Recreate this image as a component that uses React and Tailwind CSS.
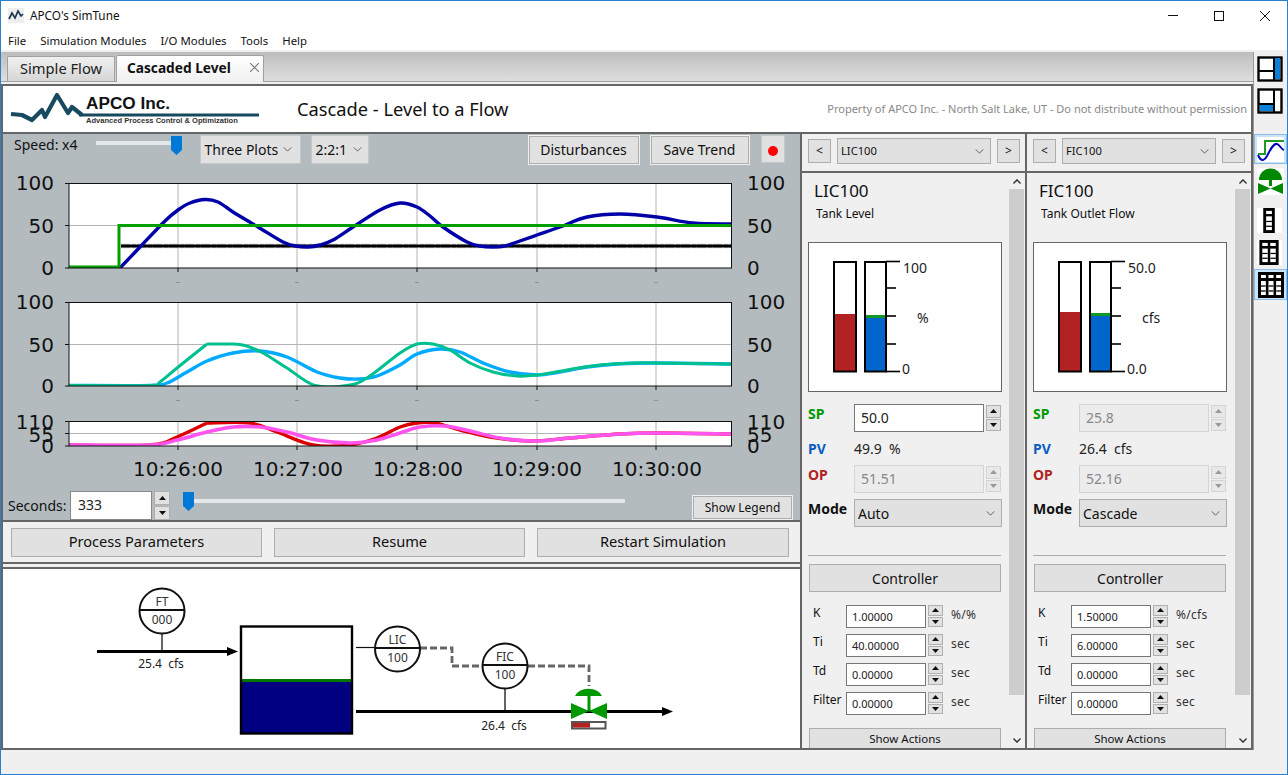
import React from "react";

const chartFont = "'DejaVu Sans', sans-serif";

function smooth(pts) {
  let d = `M${pts[0][0]} ${pts[0][1]}`;
  for (let i = 0; i < pts.length - 1; i++) {
    const p0 = pts[i - 1] || pts[i];
    const p1 = pts[i];
    const p2 = pts[i + 1];
    const p3 = pts[i + 2] || p2;
    const c1x = p1[0] + (p2[0] - p0[0]) / 6;
    const c1y = p1[1] + (p2[1] - p0[1]) / 6;
    const c2x = p2[0] - (p3[0] - p1[0]) / 6;
    const c2y = p2[1] - (p3[1] - p1[1]) / 6;
    d += ` C${c1x} ${c1y} ${c2x} ${c2y} ${p2[0]} ${p2[1]}`;
  }
  return d;
}

const pv1 = [[120,268],[140,247],[165,221],[178,210],[190,203],[205,199.5],[218,202],[233,212],[258,227],[283,242],[296,246],[308,247],[320,245],[333,240],[353,227],[380,210],[400,203],[417,207],[430,216],[443,227],[467,242],[480,246],[493,247],[505,246],[517,242],[537,235],[560,227],[587,217],[620,214],[657,217],[693,223],[731,224]];
const sp2a = [[69,385.5],[150,385.5],[160,382],[177,368],[207,344]];
const sp2b = [[207,344],[230,344],[245,345.5],[263,353],[287,368],[315,385.5],[347,385.5],[367,378],[400,353],[417,344],[433,344],[450,350],[470,363],[493,372],[517,376],[537,375],[567,370],[600,365],[633,363],[657,363],[731,364]];
const op2 = [[69,385.5],[150,385.5],[167,383],[187,372],[207,361],[233,353],[260,351],[287,357],[317,372],[340,378],[360,379],[377,376],[400,365],[417,354],[440,349],[460,352],[483,363],[510,372],[537,375],[560,372],[587,367],[617,364],[657,363],[731,364]];
const red3a = [[69,445],[150,445],[177,437],[207,423]];
const red3b = [[207,423],[250,423],[277,432],[313,445],[350,445],[377,438],[400,427],[417,423],[435,423],[460,430],[490,437],[530,441],[570,438],[620,434],[657,433],[731,434]];
const mag3 = [[69,445],[150,445],[177,440],[207,432],[233,427],[260,427],[287,432],[317,440],[350,443],[377,440],[400,433],[420,427],[445,426],[470,431],[500,438],[535,441],[570,438],[620,434],[657,433],[731,434]];

const gridX = [178, 297, 417, 537, 656];

function Plot({ top, bottom, mid, labels, offsets, children, showMinus }) {
  const clip = `plot-${top}`;
  return (
    <g>
      <clipPath id={clip}>
        <rect x="69" y={top} width="662.5" height={bottom - top} />
      </clipPath>
      <rect x="69" y={top} width="662.5" height={bottom - top} fill="white" />
      {gridX.map((x) => (
        <line key={x} x1={x} x2={x} y1={top} y2={bottom} stroke="#b4b4b4" />
      ))}
      <line x1="69" x2="731" y1={mid} y2={mid} stroke="#b4b4b4" />
      <g clipPath={`url(#${clip})`}>{children}</g>
      <rect x="69" y={top} width="662.5" height={bottom - top} fill="none" stroke="#111" />
      {[top, mid, bottom].map((y) => (
        <line key={y} x1="65" x2="69" y1={y} y2={y} stroke="#111" />
      ))}
      {gridX.map((x) => (
        <line key={x} x1={x} x2={x} y1={bottom} y2={bottom + 4} stroke="#111" />
      ))}
      {showMinus && gridX.map((x) => (
        <line key={x} x1={x - 2} x2={x + 2} y1={bottom + 14.5} y2={bottom + 14.5} stroke="#8a9094" />
      ))}
      {labels.map((t, i) => (
        <g key={i} fontSize="20" fontFamily={chartFont} fill="#111">
          <text x="54" y={offsets[i]} textAnchor="end">{t}</text>
          <text x="747" y={offsets[i]}>{t}</text>
        </g>
      ))}
    </g>
  );
}

function Charts() {
  return (
    <svg viewBox="3 170 797 320" className="block w-[797px] h-[320px]">
      <Plot top={183.5} bottom={268} mid={225.5} labels={["100", "50", "0"]} offsets={[190, 233, 275]} showMinus>
        <polyline points="121,246 731,246" fill="none" stroke="#c4c4c4" strokeWidth="4.4" strokeDasharray="9 2 4 1" />
        <polyline points="121,246 731,246" fill="none" stroke="#000" strokeWidth="2.8" />
        <path d={smooth(pv1)} fill="none" stroke="#0000a8" strokeWidth="3.4" />
        <polyline points="69,267 119,267 119,225.5 731,225.5" fill="none" stroke="#009f00" strokeWidth="3" />
      </Plot>
      <Plot top={302.5} bottom={386} mid={344.5} labels={["100", "50", "0"]} offsets={[309, 352, 393]} showMinus>
        <path d={smooth(op2)} fill="none" stroke="#00aaff" strokeWidth="3.4" />
        <path d={smooth(sp2a) + " " + smooth(sp2b)} fill="none" stroke="#00c090" strokeWidth="3" />
      </Plot>
      <Plot top={421.5} bottom={446} mid={433.5} labels={["110", "55", "0"]} offsets={[429, 442, 453]}>
        <path d={smooth(red3a) + " " + smooth(red3b)} fill="none" stroke="#dd0000" strokeWidth="3.4" />
        <path d={smooth(mag3)} fill="none" stroke="#ff55ee" strokeWidth="3.6" />
      </Plot>
      <g fontSize="20" fontFamily={chartFont} fill="#111" textAnchor="middle">
        <text x="178" y="476">10:26:00</text>
        <text x="298" y="476">10:27:00</text>
        <text x="418" y="476">10:28:00</text>
        <text x="537" y="476">10:29:00</text>
        <text x="657" y="476">10:30:00</text>
      </g>
    </svg>
  );
}

function Chevron({ className, bold }) {
  return (
    <svg viewBox="0 0 10 6" className={className || "w-[9px] h-[5px]"}>
      <polyline points="0.5,0.5 5,5 9.5,0.5" fill="none" stroke={bold ? "#333" : "#555"} strokeWidth={bold ? 1.8 : 1.1} />
    </svg>
  );
}

function Select({ value, className, text }) {
  return (
    <div className={`flex items-center justify-between bg-[#e1e1e1] border ${className} ${text || "text-[14px]"}`}>
      <span className="text-[#111]">{value}</span>
      <Chevron />
    </div>
  );
}

function Spinner({ h, w, disabled, gap }) {
  const color = disabled ? "#999" : "#111";
  const cls = disabled ? "border-[#d4d4d4] bg-[#e8e8e8]" : "border-[#b0b0b0] bg-[#e1e1e1]";
  return (
    <div className={`flex flex-col justify-between ${w} ${h}`}>
      {[0, 1].map((i) => (
        <div key={i} className={`flex-1 flex items-center justify-center border ${cls} ${i === 0 ? gap : ""}`}>
          <svg viewBox="0 0 7 4" className="w-[7px] h-[4px]">
            <polygon points={i === 0 ? "3.5,0 7,4 0,4" : "0,0 7,0 3.5,4"} fill={color} />
          </svg>
        </div>
      ))}
    </div>
  );
}

function Thumb({ className }) {
  return (
    <svg viewBox="0 0 11 19" className={className}>
      <polygon points="0,0 11,0 11,14 5.5,19 0,14" fill="#0078d7" />
    </svg>
  );
}

function Gauge({ op, sp, top, unit, low }) {
  const ticks = [261.5, 288, 316, 344, 371.5];
  return (
    <svg viewBox="808 242 194 150" className="block w-[194px] h-[150px] bg-white">
      <rect x="808.5" y="242.5" width="193" height="149" fill="none" stroke="#666" />
      <rect x="834" y={op} width="22" height={371 - op} fill="#b22222" />
      <rect x="865" y={sp} width="21" height={371 - sp} fill="#0066cc" />
      <rect x="865" y={sp - 3} width="21" height="3" fill="#119922" />
      <rect x="834" y="262" width="22" height="109.5" fill="none" stroke="#000" strokeWidth="2" />
      <rect x="865" y="262" width="21" height="109.5" fill="none" stroke="#000" strokeWidth="2" />
      {ticks.map((y, i) => (
        <line key={y} x1="886" x2={i % 4 === 0 ? 900 : 896} y1={y} y2={y} stroke="#000" strokeWidth="1.6" />
      ))}
      <g fontSize="14" fill="#222" fontFamily="'Noto Sans', sans-serif">
        <text x="903" y="273">{top}</text>
        <text x="917" y="323">{unit}</text>
        <text x="902" y="374">{low}</text>
      </g>
    </svg>
  );
}

function TuneRow({ label, value, unit }) {
  return (
    <div className="flex items-start h-[23px]">
      <span className="w-[33px] text-[12px] leading-[16px] text-[#111]">{label}</span>
      <div className="w-[80px] h-[23px] border border-[#777] bg-white pl-[5px] text-[11px] leading-[21px] text-[#222]">{value}</div>
      <Spinner h="h-[22px]" w="w-[15px] ml-[2px]" gap="mb-[1px]" />
      <span className="ml-[8px] text-[12px] leading-[20px] tracking-[0.3px] text-[#333]">{unit}</span>
    </div>
  );
}

function Panel({ name, desc, gauge, sp, spOn, pv, op, mode, tune, width, pad }) {
  return (
    <div className={`${width} shrink-0 flex flex-col`}>
      <div className={`h-[33px] ${pad} flex items-start pt-[4px] border-b-2 border-[#666] box-content`}>
        <div className="w-[23px] h-[24px] mt-[1px] flex items-center justify-center bg-[#e1e1e1] border border-[#adadad] text-[12px] text-[#111]">&lt;</div>
        <Select value={name} className="w-[154px] h-[26px] ml-[6px] pl-[3px] pr-[6px] border-[#adadad] border-[1.5px]" text="text-[11.2px]" />
        <div className="w-[23px] h-[24px] mt-[1px] ml-[6px] flex items-center justify-center bg-[#e1e1e1] border border-[#adadad] text-[12px] text-[#111]">&gt;</div>
      </div>
      <div className="flex-1 flex overflow-hidden">
        <div className={`${pad} flex-1 overflow-hidden`}>
          <div className="mt-[6px] ml-[6px] text-[17px] leading-[24px] text-[#111]">{name}</div>
          <div className="mt-[3px] ml-[8px] text-[12px] leading-[16px] text-[#111]">{desc}</div>
          <div className="mt-[20px]">{gauge}</div>
          <div className="mt-[12px] flex h-[28px]">
            <span className="w-[46px] text-[14px] font-bold leading-[20px] text-[#009900]">SP</span>
            <div className={`w-[130px] h-[28px] border pl-[6px] text-[14px] leading-[26px] ${spOn ? "border-[#777] bg-white text-[#222]" : "border-[#d4d4d4] bg-[#ececec] text-[#888]"}`}>{sp}</div>
            <Spinner h="h-[26px] mt-[1px]" w="w-[15px] ml-[2px]" disabled={!spOn} gap="mb-[1px]" />
          </div>
          <div className="mt-[8px] flex h-[18px] text-[14px] leading-[18px]">
            <span className="w-[46px] font-bold text-[#0a5cc0]">PV</span>
            <span className="text-[#222] whitespace-pre">{pv}</span>
          </div>
          <div className="mt-[7px] flex h-[28px]">
            <span className="w-[46px] text-[14px] font-bold leading-[20px] text-[#b22222]">OP</span>
            <div className="w-[130px] h-[28px] border border-[#d4d4d4] bg-[#ececec] pl-[6px] text-[14px] leading-[26px] text-[#888]">{op}</div>
            <Spinner h="h-[26px] mt-[1px]" w="w-[15px] ml-[2px]" disabled gap="mb-[1px]" />
          </div>
          <div className="mt-[6px] flex h-[28px]">
            <span className="w-[46px] text-[14px] font-bold leading-[20px] text-[#111]">Mode</span>
            <Select value={mode} className="w-[148px] h-[28px] pl-[3px] pr-[6px] border-[#adadad]" />
          </div>
          <div className="mt-[28px] w-[193px] h-px bg-[#aaa]" />
          <div className="mt-[8px] ml-[1px] w-[192px] h-[28px] flex items-center justify-center bg-[#e1e1e1] border border-[#adadad] text-[14px] text-[#111]">Controller</div>
          <div className="mt-[13px] ml-[5px] flex flex-col gap-[6px]">
            {tune.map((r) => (
              <TuneRow key={r[0]} label={r[0]} value={r[1]} unit={r[2]} />
            ))}
          </div>
          <div className="mt-[13px] ml-[1px] w-[192px] h-[20px] flex items-start pt-[2px] justify-center bg-[#e1e1e1] border border-b-0 border-[#adadad] text-[11.5px] leading-[16px] text-[#111]">Show Actions</div>
        </div>
        <div className="w-[15px] mr-[1px] shrink-0 flex flex-col items-center bg-[#f0f0f0]">
          <div className="h-[16px] flex items-center">
            <Chevron bold className="w-[8px] h-[5px] rotate-180" />
          </div>
          <div className="w-full h-[506px] bg-[#cdcdcd]" />
          <div className="flex-1 flex items-end pb-[5px]">
            <Chevron bold className="w-[8px] h-[5px]" />
          </div>
        </div>
      </div>
    </div>
  );
}

function Instrument({ cx, cy, a, b }) {
  return (
    <g>
      <circle cx={cx} cy={cy} r="22.5" fill="white" stroke="#111" strokeWidth="2" />
      <line x1={cx - 22.5} x2={cx + 22.5} y1={cy - 1} y2={cy - 1} stroke="#111" strokeWidth="2" />
      <text x={cx} y={cy - 5.5} fontSize="12" textAnchor="middle" fill="#333">{a}</text>
      <text x={cx} y={cy + 13} fontSize="12" textAnchor="middle" fill="#333">{b}</text>
    </g>
  );
}

function Diagram() {
  return (
    <svg viewBox="3 569 797 179" className="block w-[797px] h-[179px]" fontFamily="'Noto Sans', sans-serif">
      <line x1="162" x2="162" y1="633" y2="651" stroke="#111" strokeWidth="1.3" />
      <Instrument cx={162} cy={611} a="FT" b="000" />
      <line x1="97" x2="230" y1="651.5" y2="651.5" stroke="#000" strokeWidth="3" />
      <polygon points="227,647 238,651.5 227,656" fill="#000" />
      <text x="161" y="668" fontSize="12" textAnchor="middle" fill="#222" xmlSpace="preserve">25.4  cfs</text>

      <rect x="241" y="626.5" width="111" height="107" fill="white" />
      <rect x="241" y="681.5" width="111" height="52" fill="#000080" />
      <rect x="241" y="679" width="111" height="3" fill="#007700" />
      <rect x="241" y="626.5" width="111" height="107" fill="none" stroke="#000" strokeWidth="2.4" />

      <line x1="356" x2="376" y1="647.5" y2="647.5" stroke="#111" strokeWidth="1.2" />
      <polyline points="420,648 452,648 452,666 484,666" fill="none" stroke="#666" strokeWidth="2.8" strokeDasharray="7 3" />
      <polyline points="528,666 589,666 589,686" fill="none" stroke="#666" strokeWidth="2.8" strokeDasharray="7 3" />
      <Instrument cx={397.5} cy={649} a="LIC" b="100" />
      <Instrument cx={505} cy={666} a="FIC" b="100" />
      <line x1="505" x2="505" y1="688" y2="711" stroke="#111" strokeWidth="1.3" />

      <line x1="356" x2="665" y1="711.5" y2="711.5" stroke="#000" strokeWidth="3" />
      <polygon points="662,707 673,711.5 662,716" fill="#000" />
      <text x="504" y="730" fontSize="12" textAnchor="middle" fill="#222" xmlSpace="preserve">26.4  cfs</text>

      <path d="M575 696 A14 10 0 0 1 602 696 Z" fill="#009900" />
      <rect x="587.5" y="696" width="3" height="15" fill="#009900" />
      <polygon points="571,703 571,719 589,711" fill="#009900" />
      <polygon points="607,703 607,719 589,711" fill="#009900" />
      <rect x="572" y="722" width="33.5" height="6.5" fill="white" stroke="#555" strokeWidth="2" />
      <rect x="573" y="723" width="17" height="4.5" fill="#b22222" />
    </svg>
  );
}

function Logo() {
  return (
    <div className="relative w-[270px] h-[46px] shrink-0">
      <svg viewBox="0 0 270 46" className="absolute left-0 top-0 w-[270px] h-[46px]">
        <path d="M8 28 L19 29 L29 34 L39 24 L42 31 L54 9 L65 27 L69 21 L79 29" fill="none" stroke="#174a5f" strokeWidth="4.2" strokeLinejoin="round" />
        <line x1="76" x2="256" y1="29" y2="29" stroke="#174a5f" strokeWidth="3.2" />
      </svg>
      <span className="absolute left-[83px] top-[6px] text-[17.2px] leading-[22px] font-bold text-[#111] font-['Liberation_Sans']">APCO Inc.</span>
      <span className="absolute left-[83px] top-[30px] text-[7.55px] leading-[9px] font-bold text-[#333] whitespace-nowrap font-['Liberation_Sans']">Advanced Process Control &amp; Optimization</span>
    </div>
  );
}

function Frame({ children }) {
  return <svg viewBox="0 0 26 26" className="block w-[26px] h-[26px] bg-white">{children}</svg>;
}

function Columns({ n, x, w }) {
  const cols = [];
  for (let i = 0; i < n; i++) cols.push(i);
  const cw = w / n;
  return (
    <g>
      <rect x={x} y="1.5" width={w} height="23" fill="white" stroke="#000" strokeWidth="3" />
      {cols.map((i) => (
        <g key={i}>
          {i > 0 && <line x1={x + i * cw} x2={x + i * cw} y1="2" y2="24" stroke="#000" strokeWidth="2.6" />}
          <line x1={x} x2={x + w} y1="7.5" y2="7.5" stroke="#000" strokeWidth="2.4" />
          <line x1={x + i * cw + 1.5} x2={x + (i + 1) * cw - 1.5} y1="14" y2="14" stroke="#000" strokeWidth="1.3" />
          <line x1={x + i * cw + 1.5} x2={x + (i + 1) * cw - 1.5} y1="19" y2="19" stroke="#000" strokeWidth="1.3" />
        </g>
      ))}
    </g>
  );
}

function Toolbar() {
  return (
    <div className="flex-1 flex flex-col items-center bg-[#f0f0f0] border-l border-[#999]">
      <div className="mt-[4px] ml-[-2px]">
        <Frame>
          <rect x="1.5" y="1.5" width="23" height="23" fill="white" stroke="#000" strokeWidth="2.4" />
          <rect x="18" y="2" width="5" height="21" fill="#0a80d8" />
          <line x1="17" x2="17" y1="2" y2="24" stroke="#000" strokeWidth="2" />
          <line x1="2" x2="17" y1="15" y2="15" stroke="#000" strokeWidth="2" />
        </Frame>
      </div>
      <div className="mt-[6px] ml-[-2px]">
        <Frame>
          <rect x="1.5" y="1.5" width="23" height="23" fill="white" stroke="#000" strokeWidth="2.4" />
          <rect x="3" y="17" width="14" height="6" fill="#0a80d8" />
          <line x1="17" x2="17" y1="2" y2="24" stroke="#000" strokeWidth="2" />
          <line x1="2" x2="17" y1="16" y2="16" stroke="#000" strokeWidth="2" />
        </Frame>
      </div>
      <div className="mt-[20px] w-[33px] h-[30px] flex items-center justify-center bg-[#cce4f7] border border-[#8cbce6]">
        <svg viewBox="0 0 27 25" className="block w-[27px] h-[25px] bg-white">
          <polyline points="1,17 8,17 8,4 27,4" fill="none" stroke="#1e9a2a" strokeWidth="2" />
          <path d="M1 18 C4 25 7 24 10 19 C14 11 17 6 20 7 C23 8 24 12 27 13" fill="none" stroke="#0000c0" strokeWidth="2" />
        </svg>
      </div>
      <svg viewBox="0 0 27 27" className="mt-[4px] ml-[-1px] block w-[27px] h-[27px] bg-white">
        <path d="M2 12 A11.5 11.5 0 0 1 25 12 Z" fill="#008800" />
        <rect x="12" y="12" width="3" height="6" fill="#008800" />
        <polygon points="1,15 1,26 13.5,20.5" fill="#008800" />
        <polygon points="26,15 26,26 13.5,20.5" fill="#008800" />
      </svg>
      <svg viewBox="0 0 26 26" className="mt-[13px] ml-[-2px] block w-[25px] h-[25px] bg-white">
        <Columns n={1} x={8} w={9} />
      </svg>
      <svg viewBox="0 0 26 26" className="mt-[7px] ml-[-2px] block w-[25px] h-[25px] bg-white">
        <Columns n={2} x={4} w={17} />
      </svg>
      <div className="mt-[4px] w-[33px] h-[31px] flex items-center justify-center bg-[#cce4f7] border border-[#8cbce6]">
        <svg viewBox="0 0 26 26" className="block w-[26px] h-[26px] bg-white">
          <Columns n={3} x={1.5} w={23} />
        </svg>
      </div>
    </div>
  );
}

const flatBtn = "flex items-center justify-center bg-[#e1e1e1] border border-[#adadad] text-[14.6px] text-[#111]";
const lightBtn = "flex items-center justify-center bg-[#e1e1e1] border-2 border-[#f0f0f0] outline outline-[#adadad] outline-offset-[-2px] text-[14px] text-[#111]";

export default function App() {
  return (
    <div className="w-[1288px] h-[775px] flex flex-col overflow-hidden border border-[#2b7fd1] bg-[#f0f0f0] font-['Noto_Sans',sans-serif]">
      {/* title bar */}
      <div className="h-[29px] shrink-0 flex items-center bg-white">
        <svg viewBox="0 0 16 15" className="ml-[7px] w-[16px] h-[15px]">
          <rect x="0" y="0" width="16" height="15" fill="#eeeeee" />
          <polyline points="1,11 4,5 7,10 10,3 13,8 15,6" fill="none" stroke="#17384f" strokeWidth="1.7" />
        </svg>
        <span className="ml-[6px] text-[11.75px] text-[#111]">APCO's SimTune</span>
        <div className="ml-auto flex h-full">
          <div className="w-[46px] flex items-center justify-center">
            <div className="w-[10px] h-px bg-[#111]" />
          </div>
          <div className="w-[46px] flex items-center justify-center">
            <div className="w-[10px] h-[10px] border border-[#111]" />
          </div>
          <div className="w-[45px] flex items-center justify-center">
            <svg viewBox="0 0 10 10" className="w-[10px] h-[10px]">
              <path d="M0 0 L10 10 M10 0 L0 10" stroke="#111" strokeWidth="1" />
            </svg>
          </div>
        </div>
      </div>

      {/* menu */}
      <div className="h-[20px] shrink-0 flex items-center gap-[14px] pl-[7px] pt-[2px] bg-white text-[11.4px] text-[#111]">
        <span>File</span>
        <span>Simulation Modules</span>
        <span>I/O Modules</span>
        <span>Tools</span>
        <span>Help</span>
      </div>
      <div className="h-[2px] shrink-0 bg-[#f0f0f0]" />

      <div className="flex-1 flex min-h-0">
        <div className="w-[1252px] shrink-0 flex flex-col">
          {/* tabs */}
          <div className="h-[29px] shrink-0 flex items-end pl-[6px] bg-[linear-gradient(#bdbdbd,#dedede)] border-b border-[#a0a0a0] box-content">
            <div className="w-[108px] h-[25px] flex items-center justify-center pb-[1px] bg-[linear-gradient(#f0f0f0,#d6d6d6)] border border-b-0 border-[#a0a0a0] rounded-t-[2px] text-[14.7px] text-[#222]">Simple Flow</div>
            <div className="w-[148px] h-[27px] ml-[1px] mb-[-1px] relative flex items-center pl-[10px] pb-[1px] bg-[linear-gradient(#ffffff,#f0f0f0)] border border-b-0 border-[#a0a0a0] rounded-t-[2px] text-[13.7px] font-bold text-[#111]">
              Cascaded Level
              <svg viewBox="0 0 9 9" className="absolute left-[133px] top-[7px] w-[9px] h-[9px]">
                <path d="M0 0 L9 9 M9 0 L0 9" stroke="#777" strokeWidth="1.1" />
              </svg>
            </div>
          </div>

          {/* main frame */}
          <div className="flex-1 min-h-0 mt-[2px] flex flex-col border-2 border-[#666]">
            <div className="h-[46px] shrink-0 flex items-center bg-white border-b-2 border-[#666] box-content">
              <Logo />
              <span className="ml-[24px] text-[18.25px] text-[#111]">Cascade - Level to a Flow</span>
              <span className="ml-auto mr-[4px] text-[11px] text-[#888] whitespace-nowrap">Property of APCO Inc. - North Salt Lake, UT - Do not distribute without permission</span>
            </div>
            <div className="flex-1 flex min-h-0">
              {/* left */}
              <div className="w-[799px] shrink-0 flex flex-col border-r-2 border-[#666]">
                <div className="h-[386px] shrink-0 bg-[#b4bbbf] flex flex-col">
                  <div className="h-[36px] shrink-0 flex items-start">
                    <span className="ml-[11px] mt-[1px] text-[14px] leading-[20px] text-[#111]">Speed: x4</span>
                    <div className="relative ml-[18px] mt-[7px] w-[80px] h-[4px] bg-[#e4e7e9]">
                      <Thumb className="absolute left-[75px] top-[-5px] w-[11px] h-[19px]" />
                    </div>
                    <Select value="Three Plots" className="ml-[24px] mt-[1px] w-[101px] h-[29px] pl-[4px] pr-[8px] border-[#c4c8cb]" />
                    <Select value="2:2:1" className="ml-[10px] mt-[1px] w-[58px] h-[29px] pl-[4px] pr-[6px] border-[#c4c8cb]" />
                    <div className={`${lightBtn} ml-[159px] mt-[1px] w-[112px] h-[30px] pb-[1px]`}>Disturbances</div>
                    <div className={`${lightBtn} ml-[10px] mt-[1px] w-[100px] h-[30px] pb-[1px]`}>Save Trend</div>
                    <div className="ml-[11px] mt-[1px] w-[24px] h-[28px] flex items-center justify-center bg-[#e1e1e1] border border-[#c4c8cb]">
                      <div className="w-[10px] h-[10px] mt-[4px] rounded-full bg-[#ff0000]" />
                    </div>
                  </div>
                  <Charts />
                  <div className="h-[30px] shrink-0 flex items-start">
                    <span className="ml-[5px] mt-[6px] text-[14px] leading-[20px] text-[#111] w-[62px]">Seconds:</span>
                    <div className="w-[82px] h-[29px] mt-[1px] border border-[#888] bg-white pl-[7px] text-[14px] leading-[26px] text-[#222]">333</div>
                    <Spinner h="h-[29px] mt-[1px]" w="w-[16px] ml-[2px]" gap="mb-[1px]" />
                    <div className="relative ml-[13px] mt-[9px] w-[442px] h-[4px] bg-[#e4e7e9]">
                      <Thumb className="absolute left-[0px] top-[-7px] w-[11px] h-[19px]" />
                    </div>
                    <div className={`${lightBtn} ml-[67px] mt-[5px] w-[101px] h-[25px] !text-[12px]`}>Show Legend</div>
                  </div>
                </div>
                <div className="h-[44px] shrink-0 flex items-center gap-[12px] pl-[8px] border-y-2 border-[#666] bg-[#f0f0f0]">
                  <div className={`${flatBtn} w-[251px] h-[29px]`}>Process Parameters</div>
                  <div className={`${flatBtn} w-[251px] h-[29px]`}>Resume</div>
                  <div className={`${flatBtn} w-[252px] h-[29px]`}>Restart Simulation</div>
                </div>
                <div className="h-[3px] shrink-0" />
                <div className="flex-1 border-t-2 border-[#666] bg-white overflow-hidden">
                  <Diagram />
                </div>
              </div>

              {/* right panels */}
              <Panel
                width="w-[223px] border-r-2 border-[#666] box-content"
                pad="pl-[6px]"
                name="LIC100"
                desc="Tank Level"
                gauge={<Gauge op={314} sp={318} top="100" unit="%" low="0" />}
                sp="50.0"
                spOn
                pv="49.9  %"
                op="51.51"
                mode="Auto"
                tune={[["K", "1.00000", "%/%"], ["Ti", "40.00000", "sec"], ["Td", "0.00000", "sec"], ["Filter", "0.00000", "sec"]]}
              />
              <Panel
                width="w-[224px]"
                pad="pl-[6px]"
                name="FIC100"
                desc="Tank Outlet Flow"
                gauge={<Gauge op={312} sp={316} top="50.0" unit="cfs" low="0.0" />}
                sp="25.8"
                pv="26.4  cfs"
                op="52.16"
                mode="Cascade"
                tune={[["K", "1.50000", "%/cfs"], ["Ti", "6.00000", "sec"], ["Td", "0.00000", "sec"], ["Filter", "0.00000", "sec"]]}
              />
            </div>
          </div>
        </div>
        <Toolbar />
      </div>

      {/* status bar */}
      <div className="h-[24px] shrink-0 bg-[#f0f0f0]" />
    </div>
  );
}
